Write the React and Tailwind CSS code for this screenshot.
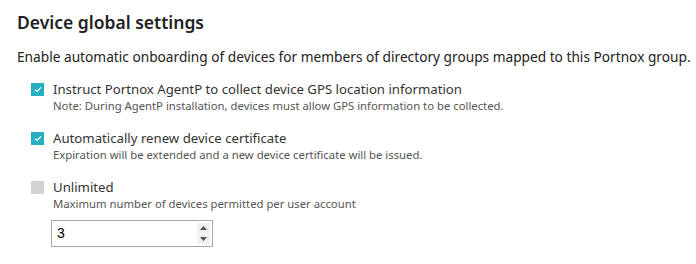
const font = { fontFamily: '"Noto Sans", "Open Sans", sans-serif' };

const Check = ({ checked }) =>
  checked ? (
    <span className="flex h-[13px] w-[13px] shrink-0 items-center justify-center bg-[#26b0bf]">
      <svg width="8" height="7" viewBox="0 0 8 7" fill="none">
        <path d="M1 3.6 L3.1 5.5 L7 1.3" stroke="white" strokeWidth="1.2" />
      </svg>
    </span>
  ) : (
    <span className="h-[13px] w-[13px] shrink-0 bg-[#d2d2d2]" />
  );

const Option = ({ checked, label, note, children }) => (
  <div className="flex flex-col">
    <div className="flex items-center gap-[9px]">
      <Check checked={checked} />
      <span className="text-[13.2px] leading-[18px] text-[#333]">{label}</span>
    </div>
    <div className="pl-[22px] text-[11.3px] leading-[16px] text-[#555]">{note}</div>
    {children}
  </div>
);

export default function App() {
  return (
    <div className="h-[264px] w-[696px] bg-white pl-[17px] pt-[10px]" style={font}>
      <h2 className="text-[17.5px] font-semibold leading-[24px] text-[#222]">Device global settings</h2>
      <p className="mt-[13px] whitespace-nowrap text-[13.7px] leading-[20px] text-[#222]">
        Enable automatic onboarding of devices for members of directory groups mapped to this Portnox group.
      </p>
      <div className="mt-[13px] flex flex-col gap-[15px] pl-[14px]">
        <Option
          checked
          label="Instruct Portnox AgentP to collect device GPS location information"
          note="Note: During AgentP installation, devices must allow GPS information to be collected."
        />
        <Option
          checked
          label="Automatically renew device certificate"
          note="Expiration will be extended and a new device certificate will be issued."
        />
        <Option label="Unlimited" note="Maximum number of devices permitted per user account">
          <div className="ml-[20px] mt-[8px] flex h-[27px] w-[162px] items-center justify-between border border-[#a9a9a9] bg-white pl-[5px] pr-[2px]">
            <span className="text-[14px] text-black" style={{ fontFamily: '"Liberation Sans", Arial, sans-serif' }}>3</span>
            <div className="flex h-[21px] w-[13px] flex-col justify-between">
              <div className="flex h-[10px] items-center justify-center rounded-[1px] bg-[#f0f0f0]">
                <svg width="7" height="4" viewBox="0 0 7 4"><path d="M0 4 L3.5 0 L7 4 Z" fill="#505050" /></svg>
              </div>
              <div className="flex h-[10px] items-center justify-center rounded-[1px] bg-[#f0f0f0]">
                <svg width="7" height="4" viewBox="0 0 7 4"><path d="M0 0 L3.5 4 L7 0 Z" fill="#505050" /></svg>
              </div>
            </div>
          </div>
        </Option>
      </div>
    </div>
  );
}
